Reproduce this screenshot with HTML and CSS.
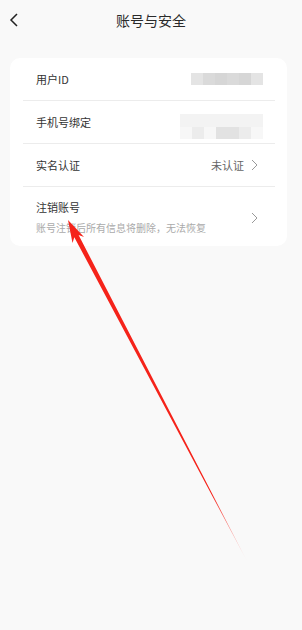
FILE: index.html
```html
<!DOCTYPE html>
<html>

<head>
    <meta charset="UTF-8">
    <meta name="viewport" content="width=device-width, initial-scale=1.0">
    <title>账号与安全</title>
    <link rel="stylesheet" href="styles.css">
</head>

<body>

    <div class="header">
        <span class="back">
            <svg width="10" height="14" viewBox="0 0 10 14">
                <path d="M8 1 L2 7 L8 13" fill="none" stroke="#222" stroke-width="1.5" />
            </svg>
        </span>
        <h1>账号与安全</h1>
    </div>

    <div class="card">
        <div class="row">
            <span class="label">用户ID</span>
            <span class="mask mask-id">
                <i class="m1"></i><i class="m2"></i><i class="m3"></i><i class="m2"></i><i class="m3"></i><i class="m1"></i>
            </span>
        </div>

        <div class="row">
            <span class="label">手机号绑定</span>
            <span class="mask mask-phone">
                <span class="mask-top"></span>
                <span class="mask-bottom">
                    <i class="p0"></i><i class="p1"></i><i class="p0"></i><i class="p2"></i><i class="p2"></i><i class="p1"></i><i class="p0"></i>
                </span>
            </span>
        </div>

        <div class="row">
            <span class="label">实名认证</span>
            <span class="value">未认证</span>
            <span class="arrow">
                <svg width="7" height="12" viewBox="0 0 7 12">
                    <path d="M1 1 L6 6 L1 11" fill="none" stroke="#999" stroke-width="1" />
                </svg>
            </span>
        </div>

        <div class="row row-last">
            <div class="text">
                <span class="label">注销账号</span>
                <span class="sub">账号注销后所有信息将删除，无法恢复</span>
            </div>
            <span class="arrow">
                <svg width="7" height="12" viewBox="0 0 7 12">
                    <path d="M1 1 L6 6 L1 11" fill="none" stroke="#999" stroke-width="1" />
                </svg>
            </span>
        </div>
    </div>

    <!-- annotation arrow drawn over the page -->
    <svg class="pointer" width="302" height="630" viewBox="0 0 302 630">
        <defs>
            <linearGradient id="fade" gradientUnits="userSpaceOnUse" x1="68" y1="220" x2="248" y2="563">
                <stop offset="0" stop-color="#f5231a" />
                <stop offset="0.8" stop-color="#f5231a" />
                <stop offset="1" stop-color="#f5231a" stop-opacity="0" />
            </linearGradient>
        </defs>
        <polygon points="68,220 84,237 78.6,235 248,563 74.3,237.2 72.5,243" fill="url(#fade)" />
    </svg>

</body>

</html>
```

FILE: styles.css
```css
body {
    margin: 0;
    background-color: #f9f9f9;
    font-family: "Noto Sans CJK SC", "Noto Sans", sans-serif;
    position: relative;
    height: 630px;
    overflow: hidden;
}

.header {
    height: 40px;
    display: flex;
    align-items: center;
    justify-content: center;
    position: relative;
}

.back {
    position: absolute;
    left: 9px;
    top: 13px;
    display: flex;
}

h1 {
    margin: 0;
    font-size: 14px;
    font-weight: normal;
    color: #2a2a2a;
}

.card {
    margin: 18px 15px 0 10px;
    background-color: #fff;
    border-radius: 10px;
}

.row {
    margin: 0 12px 0 13px;
    padding: 0 17px 0 13px;
    height: 42px;
    display: flex;
    align-items: center;
    border-bottom: 1px solid #ececec;
}

.row-last {
    height: 59px;
    border-bottom: none;
}

.label {
    font-size: 11px;
    color: #333;
}

.value {
    margin-left: auto;
    font-size: 11px;
    color: #666;
}

.arrow {
    display: flex;
    margin-left: 7px;
}

.row-last .arrow {
    margin-left: auto;
    margin-top: 2px;
}

.text {
    display: flex;
    flex-direction: column;
    gap: 5px;
}

.sub {
    font-size: 10px;
    color: #aaa;
}

.mask {
    margin-left: auto;
    display: flex;
}

.mask i {
    display: block;
    height: 12px;
}

.mask-id {
    margin-right: -5px;
}

.mask-id i {
    width: 12px;
}

.m1 {
    background-color: #e4e4e4;
}

.m2 {
    background-color: #dadada;
}

.m3 {
    background-color: #d6d6d6;
}

.mask-phone {
    flex-direction: column;
    width: 83px;
    margin-right: -5px;
    margin-top: 8px;
}

.mask-top {
    height: 13px;
    background-color: #f3f3f3;
}

.mask-bottom {
    display: flex;
}

.mask-bottom i {
    flex: 1;
}

.p0 {
    background-color: #f7f7f7;
}

.p1 {
    background-color: #ececec;
}

.p2 {
    background-color: #e2e2e2;
}

.pointer {
    position: absolute;
    left: 0;
    top: 0;
    pointer-events: none;
}
```
